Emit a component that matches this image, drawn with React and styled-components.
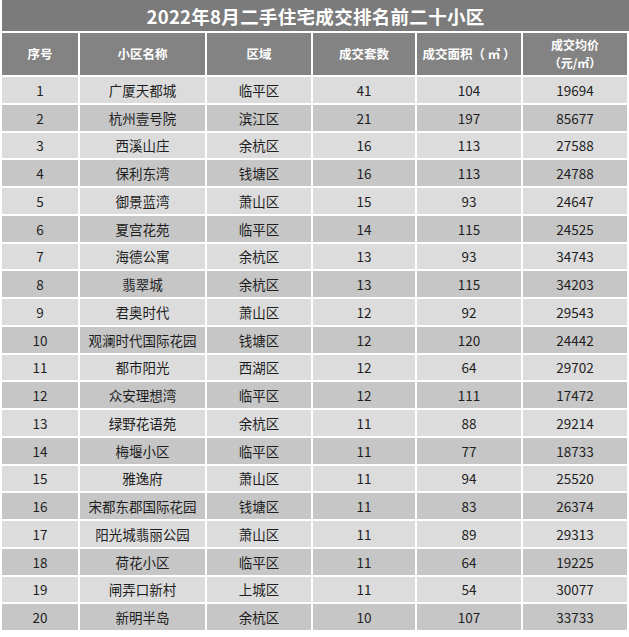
import React from "react";
import styled, { createGlobalStyle } from "styled-components";

const GlobalStyle = createGlobalStyle`
  body {
    margin: 0;
    background: #fff;
    font-family: "Noto Sans CJK SC", "Noto Sans", sans-serif;
  }
`;

// 2022年8月 成交数据
const rows = [
  [1, "广厦天都城", "临平区", 41, 104, 19694],
  [2, "杭州壹号院", "滨江区", 21, 197, 85677],
  [3, "西溪山庄", "余杭区", 16, 113, 27588],
  [4, "保利东湾", "钱塘区", 16, 113, 24788],
  [5, "御景蓝湾", "萧山区", 15, 93, 24647],
  [6, "夏宫花苑", "临平区", 14, 115, 24525],
  [7, "海德公寓", "余杭区", 13, 93, 34743],
  [8, "翡翠城", "余杭区", 13, 115, 34203],
  [9, "君奥时代", "萧山区", 12, 92, 29543],
  [10, "观澜时代国际花园", "钱塘区", 12, 120, 24442],
  [11, "都市阳光", "西湖区", 12, 64, 29702],
  [12, "众安理想湾", "临平区", 12, 111, 17472],
  [13, "绿野花语苑", "余杭区", 11, 88, 29214],
  [14, "梅堰小区", "临平区", 11, 77, 18733],
  [15, "雅逸府", "萧山区", 11, 94, 25520],
  [16, "宋都东郡国际花园", "钱塘区", 11, 83, 26374],
  [17, "阳光城翡丽公园", "萧山区", 11, 89, 29313],
  [18, "荷花小区", "临平区", 11, 64, 19225],
  [19, "闸弄口新村", "上城区", 11, 54, 30077],
  [20, "新明半岛", "余杭区", 10, 107, 33733],
];

const App = () => (
  <>
    <GlobalStyle />
    <Sheet>
      <Title>2022年8月二手住宅成交排名前二十小区</Title>
      <Row $head>
        <HeadCell>序号</HeadCell>
        <HeadCell>小区名称</HeadCell>
        <HeadCell>区域</HeadCell>
        <HeadCell>成交套数</HeadCell>
        <HeadCell>成交面积（ ㎡ ）</HeadCell>
        <HeadCell $small>
          <span>成交均价</span>
          <span>（元/㎡）</span>
        </HeadCell>
      </Row>
      {rows.map((r) => (
        <Row key={r[0]}>
          {r.map((v, i) => (
            <Cell key={i} $dark={r[0] % 2 === 0}>
              {v}
            </Cell>
          ))}
        </Row>
      ))}
    </Sheet>
  </>
);

const Sheet = styled.div`
  width: 625px;
  padding: 0 2px 0 2px;
  display: flex;
  flex-direction: column;
  gap: 2px;
`;

const Title = styled.div`
  height: 31px;
  margin-right: -2px;
  background: #7b7b7b;
  color: #fff;
  font-size: 18.5px;
  font-weight: 700;
  display: flex;
  align-items: center;
  justify-content: center;
  letter-spacing: 0.3px;
`;

const Row = styled.div`
  display: grid;
  grid-template-columns: 76px 125px 104px 102px 104px 104px;
  column-gap: 2px;
  height: ${(p) => (p.$head ? "42px" : "25.75px")};
`;

const HeadCell = styled.div`
  background: #838383;
  color: #fff;
  font-size: 12.5px;
  font-weight: 700;
  display: flex;
  flex-direction: column;
  align-items: center;
  justify-content: center;
  line-height: 18px;
  font-size: ${(p) => (p.$small ? "12px" : "12.5px")};
`;

const Cell = styled.div`
  background: ${(p) => (p.$dark ? "#c6c6c6" : "#dcdcdc")};
  color: #1e1e1e;
  font-size: 13.5px;
  display: flex;
  align-items: center;
  justify-content: center;
`;

export default App;
